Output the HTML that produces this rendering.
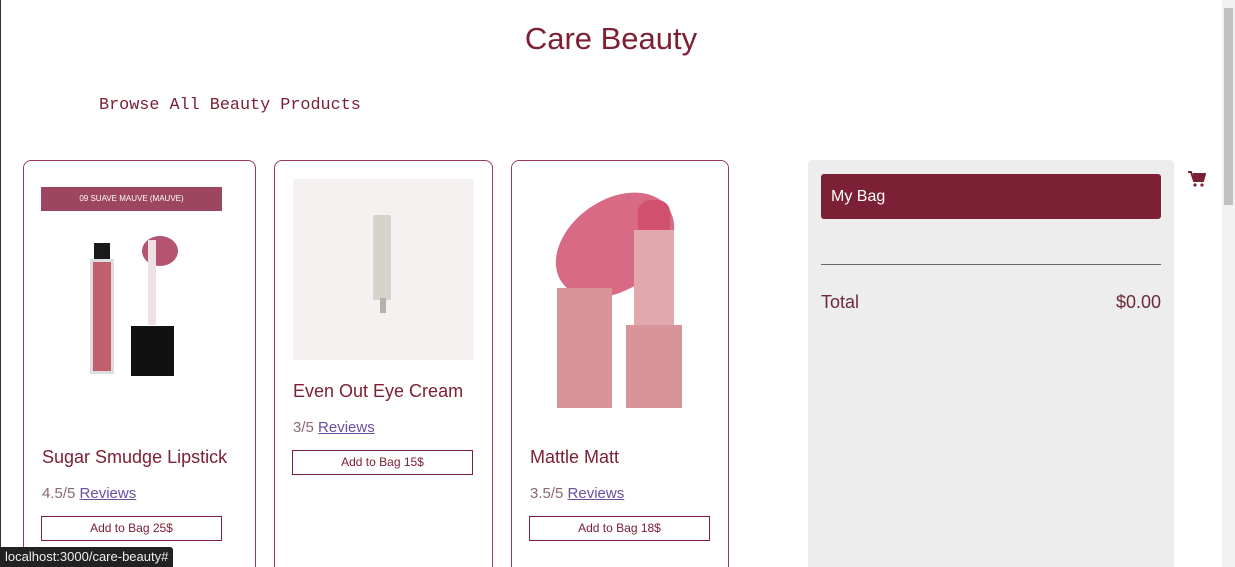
<!DOCTYPE html>
<html style="width:1235px;height:567px;overflow:hidden"><head><style>
*{box-sizing:border-box;margin:0;padding:0}
body{width:1235px;height:567px;overflow:hidden;background:#fff;font-family:"Liberation Sans",sans-serif;position:relative}
.abs{position:absolute}
h1{position:absolute;left:0;width:1222px;text-align:center;top:21px;font-weight:400;font-size:31px;color:#7b2035}
.sub{left:99px;top:96px;font-family:"Liberation Mono",monospace;font-size:16.8px;color:#7b2035}
.card{position:absolute;top:160px;height:407px;border:1px solid #9b3a52;border-bottom:none;border-radius:8px 8px 0 0;background:#fff}
.name{position:absolute;font-size:18px;color:#7b2035}
.rev{position:absolute;font-size:15px;color:#8a6a72}
.rev u{color:#6a4fa0}
.btn{position:absolute;width:181px;height:25px;border:1px solid #7b2035;font-size:12px;text-align:center;line-height:23px;color:#7b2035}
</style></head><body>
<div class="abs" style="left:0;top:0;width:1px;height:567px;background:#333"></div>
<h1>Care Beauty</h1>
<div class="abs sub">Browse All Beauty Products</div>

<div class="card" style="left:23px;width:233px"></div>
<div class="abs" style="left:41px;top:187px;width:181px;height:24px;background:#9c4660;color:#fff;font-size:8px;text-align:center;line-height:24px">09 SUAVE MAUVE (MAUVE)</div>
<div class="abs" style="left:94px;top:243px;width:16px;height:16px;background:#1a1a1a"></div>
<div class="abs" style="left:90px;top:259px;width:24px;height:115px;background:#c0606c;border:3px solid #ddd"></div>
<div class="abs" style="left:142px;top:236px;width:36px;height:30px;background:#b45470;border-radius:50%"></div>
<div class="abs" style="left:148px;top:240px;width:8px;height:85px;background:#eee0e4"></div>
<div class="abs" style="left:131px;top:326px;width:43px;height:50px;background:#111"></div>
<div class="name" style="left:42px;top:447px">Sugar Smudge Lipstick</div>
<div class="rev" style="left:42px;top:485px">4.5/5 <u>Reviews</u></div>
<div class="btn" style="left:41px;top:516px">Add to Bag 25$</div>

<div class="card" style="left:274px;width:219px"></div>
<div class="abs" style="left:293px;top:179px;width:181px;height:181px;background:#f4f1f0"></div>
<div class="abs" style="left:373px;top:215px;width:18px;height:85px;background:#d8d2cc;border-radius:2px"></div>
<div class="abs" style="left:380px;top:298px;width:6px;height:15px;background:#b8b0aa"></div>
<div class="name" style="left:293px;top:381px">Even Out Eye Cream</div>
<div class="rev" style="left:293px;top:419px">3/5 <u>Reviews</u></div>
<div class="btn" style="left:292px;top:450px">Add to Bag 15$</div>

<div class="card" style="left:511px;width:218px"></div>
<div class="abs" style="left:550px;top:200px;width:130px;height:90px;background:#d96a86;border-radius:50%;transform:rotate(-35deg)"></div>
<div class="abs" style="left:557px;top:288px;width:55px;height:120px;background:#d9949a"></div>
<div class="abs" style="left:626px;top:325px;width:56px;height:83px;background:#d9949a"></div>
<div class="abs" style="left:634px;top:230px;width:40px;height:95px;background:#e3a8ac"></div>
<div class="abs" style="left:638px;top:200px;width:32px;height:30px;background:#d0506e;border-radius:40% 40% 0 0"></div>
<div class="name" style="left:530px;top:447px">Mattle Matt</div>
<div class="rev" style="left:530px;top:485px">3.5/5 <u>Reviews</u></div>
<div class="btn" style="left:529px;top:516px">Add to Bag 18$</div>

<div class="abs" style="left:808px;top:160px;width:366px;height:407px;background:#eeeded;border-radius:4px 4px 0 0"></div>
<div class="abs" style="left:821px;top:174px;width:340px;height:45px;background:#7b2035;border-radius:3px;color:#fff;font-size:16px;line-height:45px;padding-left:10px">My Bag</div>
<div class="abs" style="left:821px;top:264px;width:340px;height:1px;background:#666"></div>
<div class="abs" style="left:821px;top:292px;font-size:18px;color:#6b2a3a">Total</div>
<div class="abs" style="left:1100px;top:292px;width:61px;text-align:right;font-size:18px;color:#6b2a3a">$0.00</div>
<svg class="abs" style="left:1188px;top:171px" width="18" height="16" viewBox="0 0 18 16"><path d="M0 1h3l3 9h9l2-7H5" fill="none" stroke="#7b2035" stroke-width="2"/><path d="M5 3h12l-2 7H6z" fill="#7b2035"/><circle cx="7" cy="14" r="1.6" fill="#7b2035"/><circle cx="14" cy="14" r="1.6" fill="#7b2035"/></svg>

<div class="abs" style="left:1222px;top:0;width:13px;height:567px;background:#f1f1f1"></div>
<div class="abs" style="left:1224px;top:8px;width:9px;height:197px;background:#c1c1c1"></div>
<div class="abs" style="left:0;top:547px;height:20px;padding:0 5px;background:#222;color:#eee;font-size:13px;line-height:20px;border-radius:0 3px 0 0">localhost:3000/care-beauty#</div>
</body></html>
